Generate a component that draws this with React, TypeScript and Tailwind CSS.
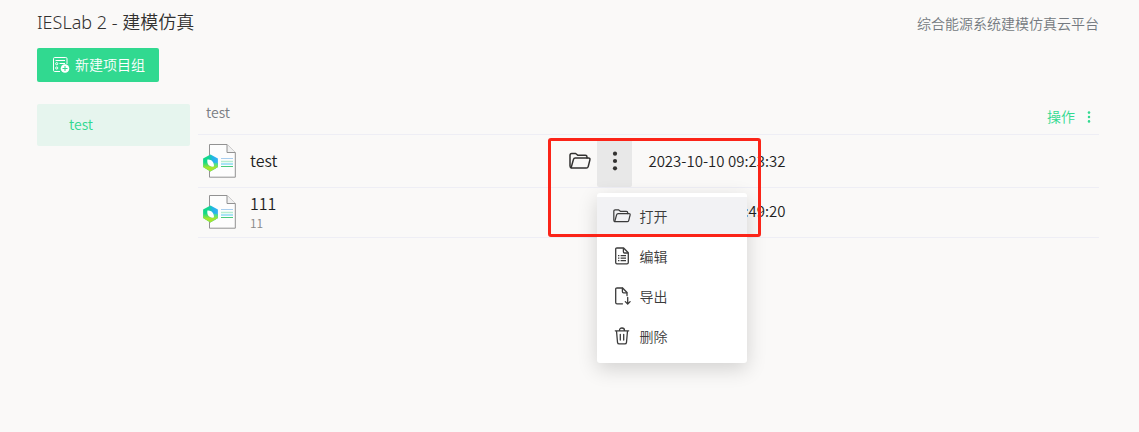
import React from 'react';

type IconProps = { className?: string };

function FolderIcon({ className }: IconProps) {
  return (
    <svg className={className} viewBox="0 0 22 18" fill="none" stroke="currentColor" strokeWidth="1.5" strokeLinejoin="round" strokeLinecap="round" aria-hidden="true">
      <path d="M2 15.8Q1 15.4 1 13.8V3.2Q1 1.5 2.7 1.5H6.6L9 3.3H16.3Q18 3.3 18 5V6" />
      <path d="M2.2 15.4 4.4 7.6Q4.8 6.1 6.3 6.1H19.5Q21.3 6.1 20.9 7.8L19.2 14.6Q18.8 16 17.3 16H3Q2.1 16 2.2 15.4Z" />
    </svg>
  );
}

function EditIcon({ className }: IconProps) {
  return (
    <svg className={className} viewBox="0 0 18 18" fill="none" stroke="currentColor" strokeWidth="1.3" strokeLinejoin="round" aria-hidden="true">
      <path d="M2.7 2.2Q2.7 1 3.9 1H10.6L15.3 5.8V15.5Q15.3 16.8 14 16.8H4Q2.7 16.8 2.7 15.5Z" />
      <path d="M10.4 1.2V4.8Q10.4 6 11.6 6H15M5 8.7H6.4M7.6 8.7H13M5 11.2H6.4M7.6 11.2H13M5 13.7H6.4M7.6 13.7H13" />
    </svg>
  );
}

function ExportIcon({ className }: IconProps) {
  return (
    <svg className={className} viewBox="0 0 18 18" fill="none" stroke="currentColor" strokeWidth="1.3" strokeLinejoin="round" strokeLinecap="round" aria-hidden="true">
      <path d="M9.5 16.8H4Q2.7 16.8 2.7 15.5V2.2Q2.7 1 4 1H9.6L14 5.5V8.5" />
      <path d="M9.4 1.2V4.6Q9.4 5.8 10.6 5.8H13.8M14.7 10.5V16.8M12.3 14.6 14.7 17 17.1 14.6" />
    </svg>
  );
}

function TrashIcon({ className }: IconProps) {
  return (
    <svg className={className} viewBox="0 0 18 18" fill="none" stroke="currentColor" strokeWidth="1.3" strokeLinejoin="round" strokeLinecap="round" aria-hidden="true">
      <path d="M2.3 3.8H15.7M6.5 3.6Q6.5 1 9 1T11.5 3.6M3.5 4 4.5 15.3Q4.7 16.9 6.2 16.9H11.8Q13.3 16.9 13.5 15.3L14.5 4M7.3 7.3V13M10.7 7.3V13" />
    </svg>
  );
}

function MoreIcon({ className }: IconProps) {
  return (
    <svg className={className} viewBox="0 0 6 20" fill="currentColor" aria-hidden="true">
      <circle cx="3" cy="2.7" r="2.1" />
      <circle cx="3" cy="10" r="2.1" />
      <circle cx="3" cy="17.3" r="2.1" />
    </svg>
  );
}

function NewGroupIcon({ className }: IconProps) {
  return (
    <svg className={className} viewBox="0 0 17 16" fill="none" stroke="currentColor" aria-hidden="true">
      <path d="M7 14.5H1.7Q.5 14.5 .5 13.3V1.7Q.5 .5 1.7 .5H12.8Q14 .5 14 1.7V7M2.5 3.5H12M6.5 6.5H12" />
      <circle cx="3.7" cy="6.7" r="1.1" />
      <circle cx="3.7" cy="11" r="1.1" />
      <circle cx="12" cy="11.5" r="4.3" fill="currentColor" stroke="none" />
      <path d="M12 9V14M9.5 11.5H14.5" stroke="#31d990" />
    </svg>
  );
}

function ProjectIcon() {
  const id = React.useId();
  return (
    <svg className="h-[34px] w-[33px] shrink-0" viewBox="0 0 33 34" fill="none" aria-hidden="true">
      <defs>
        <clipPath id={`${id}clip`}>
          <path d="M7.5 10.5 14.9 14.6V23L7.5 27.5 .1 23V14.6Z" />
        </clipPath>
        <linearGradient id={`${id}top`} x1="0" y1="0" x2="1" y2="0">
          <stop offset=".35" stopColor="#12d88a" />
          <stop offset=".65" stopColor="#22b4e8" />
          <stop offset="1" stopColor="#35b0f5" />
        </linearGradient>
        <linearGradient id={`${id}bottom`} x1="0" y1="0" x2="0" y2="1">
          <stop offset=".45" stopColor="#8fe83a" stopOpacity="0" />
          <stop offset=".75" stopColor="#a4e62f" />
        </linearGradient>
      </defs>
      <path d="M6.5.5H24L32.3 8.8V33.2H6.5Z" fill="#fdfdfd" stroke="#929292" />
      <path d="M24 .5V8.5H32.3" fill="#f1f1f1" stroke="#929292" />
      <path d="M18 14.5H30" stroke="#a8ceef" />
      <path d="M18 17.5H30" stroke="#b7edd0" strokeWidth="1.5" />
      <path d="M18 20H30" stroke="#55c9ee" />
      <path d="M18 22.5H30" stroke="#4acb7c" />
      <g clipPath={`url(#${id}clip)`}>
        <path d="M0 10H15V28H0Z" fill={`url(#${id}top)`} />
        <path d="M11 19H15V24L11 27Z" fill="#24d8c1" />
        <path d="M0 10H15V28H0Z" fill={`url(#${id}bottom)`} />
      </g>
      <path d="M4.4 15.6C8 15 11.4 17.8 10.9 22.6 6.6 23.4 3.6 20.4 4.4 15.6Z" fill="#fff" />
    </svg>
  );
}

const menuItems = [
  { label: '打开', Icon: FolderIcon, active: true },
  { label: '编辑', Icon: EditIcon, active: false },
  { label: '导出', Icon: ExportIcon, active: false },
  { label: '删除', Icon: TrashIcon, active: false },
];

function ContextMenu() {
  return (
    <div role="menu" className="absolute top-full left-0 z-10 mt-1.5 w-[150px] rounded-[3px] bg-white pt-1 pb-1.5 shadow-[0_6px_20px_rgba(0,0,0,0.16)]">
      {menuItems.map(({ label, Icon, active }) => (
        <button key={label} type="button" role="menuitem" className={`flex h-10 w-full items-center gap-2 px-4 pb-px text-sm text-[#3b3b3b] ${active ? 'bg-[#f2f2f4]' : 'bg-white'}`}>
          <Icon className="h-[18px] w-[18px] shrink-0" />
          {label}
        </button>
      ))}
    </div>
  );
}

export default function App() {
  return (
    <div className="min-h-screen bg-[#faf9f8] pr-10 pb-6 pl-[37px] font-['Noto_Sans_CJK_SC',sans-serif] font-[350] text-[#1f1f1f]">
      <header className="flex h-12 items-center justify-between">
        <h1 className="pb-1 font-['Noto_Sans','Noto_Sans_CJK_SC',sans-serif] text-lg font-[350] text-[#323130]">IESLab 2 - 建模仿真</h1>
        <p className="pb-0.5 text-sm text-[#747980]">综合能源系统建模仿真云平台</p>
      </header>
      <button type="button" className="flex h-[34px] items-center gap-[5px] rounded-[2px] bg-[#31d990] pr-3.5 pl-4 text-sm text-white">
        <NewGroupIcon className="h-4 w-[17px]" />
        <span className="pb-0.5">新建项目组</span>
      </button>

      <div className="mt-[22px] flex items-start gap-2">
        <nav className="w-[153px] shrink-0">
          <a href="#test" className="flex h-[42px] items-center rounded-[2px] bg-[#e6f5ee] px-8 pb-0.5 text-sm text-[#31d990]">test</a>
        </nav>

        <main className="min-w-0 flex-1">
          <div className="flex h-[31px] items-center justify-between border-b border-[#eeeef5] pl-2">
            <h2 className="pb-3.5 text-sm text-[#797d84]">test</h2>
            <button type="button" className="flex items-center gap-3 pr-2 pb-1.5 text-sm text-[#31d990]">
              操作
              <MoreIcon className="mt-0.5 h-3 w-1" />
            </button>
          </div>

          <table className="w-full table-fixed">
            <colgroup>
              <col className="w-2/5" />
              <col className="w-[90px]" />
              <col />
            </colgroup>
            <tbody>
              <tr className="h-[52px] border-b border-[#eeeef5]">
                <td>
                  <div className="flex items-center gap-3.5 pl-[5px]">
                    <ProjectIcon />
                    <span className="pb-0.5 text-base">test</span>
                  </div>
                </td>
                <td className="pl-1 align-bottom">
                  <div className="relative flex w-[70px]">
                    <button type="button" aria-label="打开" className="flex h-12 w-[35px] items-center justify-center pb-1 text-[#323130]">
                      <FolderIcon className="h-[18px] w-[22px]" />
                    </button>
                    <div className="relative">
                      <button type="button" aria-label="更多" className="flex h-12 w-[35px] items-center justify-center rounded-b-[2px] bg-[#e8e8e8] pb-1 text-[#323130]">
                        <MoreIcon className="h-5 w-1.5" />
                      </button>
                      <ContextMenu />
                    </div>
                    <div className="pointer-events-none absolute -top-px -left-3.5 z-20 h-[99px] w-[213px] rounded-[3px] border-3 border-[#fb2418]" />
                  </div>
                </td>
                <td className="text-[15px]">2023-10-10 09:23:32</td>
              </tr>
              <tr className="h-[50px] border-b border-[#eeeef5]">
                <td>
                  <div className="flex items-center gap-3.5 pl-[5px]">
                    <ProjectIcon />
                    <div className="pb-0.5">
                      <p className="text-base leading-6">111</p>
                      <p className="text-xs leading-4 text-[#888]">11</p>
                    </div>
                  </div>
                </td>
                <td />
                <td className="pb-0.5 text-[15px]">2023-10-10 08:49:20</td>
              </tr>
            </tbody>
          </table>
        </main>
      </div>
    </div>
  );
}
